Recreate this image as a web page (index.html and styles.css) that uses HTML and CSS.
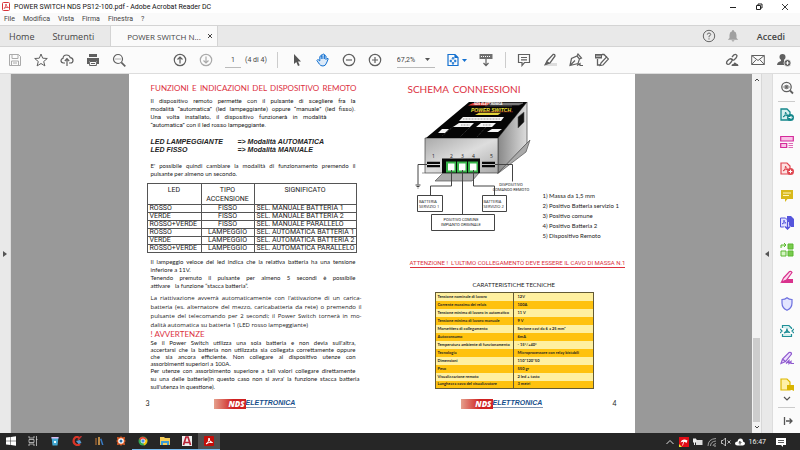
FILE: index.html
```html
<!DOCTYPE html>
<html lang="it">
<head>
<meta charset="utf-8">
<title>POWER SWITCH NDS PS12-100.pdf - Adobe Acrobat Reader DC</title>
<link rel="stylesheet" href="styles.css">
</head>
<body>
<div class="app">
  <header class="titlebar">
    <svg class="appicon" viewBox="0 0 8 9"><rect x=".5" y=".5" width="7" height="8" rx="1" fill="#fff" stroke="#d8343a"/><path d="M2 6.500C3.500 5 4 3.500 4 2c0 2 1 3 2.500 3.500C4.500 5 3 5.700 2 6.500Z" fill="none" stroke="#d8343a" stroke-width=".8"/></svg>
    <span>POWER SWITCH NDS PS12-100.pdf - Adobe Acrobat Reader DC</span>
    <div class="winbtns">
      <button aria-label="Riduci"><svg viewBox="0 0 8 8"><path d="M1 4.500h6" stroke="#222" /></svg></button>
      <button aria-label="Ripristina"><svg viewBox="0 0 8 8"><path d="M1.500 2.500h4v4h-4zM3 2.500V1h4v4H5.500" fill="none" stroke="#222"/></svg></button>
      <button aria-label="Chiudi"><svg viewBox="0 0 8 8"><path d="M1 1l6 6M7 1L1 7" stroke="#222" stroke-width=".9"/></svg></button>
    </div>
  </header>
  <nav class="menubar"><button>File</button><button>Modifica</button><button>Vista</button><button>Firma</button><button>Finestra</button><button>?</button></nav>
  <nav class="tabs">
    <button class="home">Home</button><button class="tools">Strumenti</button>
    <button class="active"><span>POWER SWITCH N...</span><svg viewBox="0 0 6 6"><path d="M1 1l4 4M5 1L1 5" stroke="#444" stroke-width="1"/></svg></button>
    <div class="account">
      <button aria-label="Guida"><svg class="i14" viewBox="0 0 14 14" fill="none" stroke="#666"><circle cx="7" cy="7" r="5.700"/><path d="M5.300 5.600Q5.400 4 7 4t1.700 1.500Q8.700 6.500 7 7.200V8.300M7 9.300v1.200"/></svg></button>
      <button aria-label="Notifiche"><svg class="i14" viewBox="0 0 14 14"><path d="M7 1q1 0 1 1.200Q10.500 3 10.500 6v3l1.700 1.700H1.800L3.500 9V6Q3.500 3 6 2.200 6 1 7 1ZM5.500 11.300h3Q8 12.500 7 12.500t-1.500-1.200" fill="#a0a0a0"/></svg></button>
      <button class="login">Accedi</button>
    </div>
  </nav>
  <div class="toolbar">
    <div class="group files">
      <button aria-label="Salva"><svg class="i14" viewBox="0 0 14 14" fill="none" stroke="#aaa"><path d="M1.500 1.500h9l2 2v9h-11zM4 1.500v4h6v-4M3.500 12.500V8h7v4.500M5 10h4"/></svg></button>
      <button aria-label="Preferiti"><svg class="i14" viewBox="0 0 14 14" fill="none" stroke="#606060"><path d="M7 1l1.700 4.200 4.600.3-3.600 3 1.200 4.400L7 10.500 3.100 12.900l1.200-4.400-3.600-3 4.600-.3z"/></svg></button>
      <button aria-label="Carica"><svg class="i14" viewBox="0 0 14 14" fill="none" stroke="#606060" stroke-width="1.200"><path d="M5 10H3.500Q1 9.700 1 7.500 1 5.700 3 5.300 3.200 2 6.500 2q3 0 3.700 2.700Q13 5 13 7.500T10.500 10H9M7 13V6M4.800 8L7 5.700 9.200 8"/></svg></button>
      <button aria-label="Stampa"><svg class="i14" viewBox="0 0 14 14"><path d="M3 1h8v3H3zM1 5h12v6h-2V8H3v3H1z" fill="#606060"/><path d="M3.600 8.500h6.800v4H3.600zM5 10.500h4" fill="#fff" stroke="#606060"/></svg></button>
      <button aria-label="Cerca"><svg class="i14" viewBox="0 0 14 14" fill="none" stroke="#606060"><circle cx="6" cy="6" r="4.500" stroke-width="1.200"/><path d="M9.300 9.300l4 4" stroke-width="1.700"/><path d="M3.500 6h1M5.500 6h1M7.500 6h1"/></svg></button>
    </div>
    <div class="group pages">
      <button aria-label="Pagina precedente"><svg class="i14" viewBox="0 0 14 14" fill="none" stroke="#606060" stroke-width="1.200"><circle cx="7" cy="7" r="5.700"/><path d="M7 10.500V4M4.500 6.500L7 4l2.500 2.500"/></svg></button>
      <button aria-label="Pagina successiva"><svg class="i14" viewBox="0 0 14 14" fill="none" stroke="#aaa" stroke-width="1.200"><circle cx="7" cy="7" r="5.700"/><path d="M7 3.500V10M4.500 7.500L7 10l2.500-2.500"/></svg></button>
    </div>
    <label class="pageno"><input value="1" aria-label="Pagina"><span>(4 di 4)</span></label>
    <i class="sep"></i>
    <div class="group view">
      <button aria-label="Selezione"><svg class="i14" viewBox="0 0 14 14"><path d="M4 1v10l2.300-2 1.700 4 1.700-.8L8 8.500h3z" fill="#555"/></svg></button>
      <button aria-label="Mano"><svg class="i14" viewBox="0 0 14 14"><path d="M3.800 8V3.500q.8-1 1.500 0V2q.8-1 1.600 0v-.5q.8-1 1.600 0V3q.8-1 1.500 0v3.500l1-1q1.500-.3 1.200.5L10.500 10Q9.500 13 7 13 4.500 13 3.300 11L.9 7.500Q1.500 6 2.700 7z" fill="#dceaf9" stroke="#1471d0"/><path d="M5.300 3v3M6.900 2.500V6M8.500 3v3" stroke="#1471d0" stroke-width=".9"/></svg></button>
      <button aria-label="Riduci zoom"><svg class="i14" viewBox="0 0 14 14" fill="none" stroke="#606060" stroke-width="1.200"><circle cx="7" cy="7" r="5.700"/><path d="M4 7h6"/></svg></button>
      <button aria-label="Aumenta zoom"><svg class="i14" viewBox="0 0 14 14" fill="none" stroke="#606060" stroke-width="1.200"><circle cx="7" cy="7" r="5.700"/><path d="M4 7h6M7 4v6"/></svg></button>
    </div>
    <div class="zoom"><select aria-label="Zoom"><option>67,2%</option></select><svg viewBox="0 0 5 3"><path d="M0 0h5L2.500 3z" fill="#555"/></svg></div>
    <div class="group fit">
      <button class="fitbtn" aria-label="Adatta"><svg class="i14" viewBox="0 0 14 14" fill="none" stroke="#1471d0" stroke-width="1.200"><path d="M2 1.500h7l3 3v8H2zM9 1.500v3h3"/><path d="M4 8h2M8 8h2M7 4.500v2M7 9v2" stroke-width="1.500"/><path d="M5 6.500L3.800 8 5 9.500M9 6.500L10.200 8 9 9.500M5.800 5.500L7 4.300l1.200 1.200M5.800 10.500L7 11.500l1.200-1" stroke-width=".8"/></svg><svg class="caret" viewBox="0 0 5 3"><path d="M0 0h5L2.500 3z" fill="#1471d0"/></svg></button>
      <button aria-label="Righello"><svg class="i14" viewBox="0 0 14 14"><path d="M.5 1h13v5H.5z" fill="#707070"/><path d="M2 3.500h10" stroke="#fff" stroke-dasharray="1 1"/><path d="M7 6v6M4.500 10L7 12.700 9.500 10" stroke="#606060" fill="none" stroke-width="1.200"/></svg></button>
    </div>
    <i class="sep"></i>
    <div class="group notes">
      <button aria-label="Commento"><svg class="i14" viewBox="0 0 14 14" fill="none" stroke="#606060" stroke-width="1.200"><path d="M1.500 1.500h11v8H7.500L5 12.500v-3H1.500zM4 4.500h6M4 6.800h6"/></svg></button>
      <button aria-label="Evidenzia"><svg class="i14" viewBox="0 0 14 14"><path d="M3 10h11v3H1z" fill="#ddd"/><path d="M4 8l6-6.500q2-.5 2 1.500L7 10l-4.500 1.500z" fill="#fff" stroke="#606060" stroke-width="1.300"/><path d="M4 8l3 2-6 2.500z" fill="#606060"/></svg></button>
      <button aria-label="Firma"><svg class="i14" viewBox="0 0 14 14" fill="none" stroke="#606060" stroke-width="1.200"><path d="M1 12.500l1.500-7L8 3l2.500 3-1.500 4.500zM1 12.500l5-5M8 3l1-2 3.500 4-2 1M8 12.500l3-2v2h3"/></svg></button>
      <button aria-label="Modifica"><svg class="i14" viewBox="0 0 14 14"><path d="M2.500 6v6h4M7 1.500h2l3 3" fill="none" stroke="#606060" stroke-width="1.300"/><path d="M0 1h7v4.500H0z" fill="#606060"/><path d="M1 3.200h5" stroke="#ddd"/><path d="M6 10l5.500-6 2 2-5.500 6-3 .5z" fill="#fff" stroke="#606060" stroke-width="1.200"/></svg></button>
    </div>
    <div class="group share">
      <button aria-label="Condividi link"><svg class="i14" viewBox="0 0 14 14"><path d="M7 4l2-2.200q2-1 3 .8 0 1.400-1 2.400L9 7Q7 8 6 6M7 8l-2.500 3q-2 1-3-.8 0-1.400 1-2.400L4.500 6Q6.500 5 8 7" fill="none" stroke="#606060" stroke-width="1.300"/><path d="M6.500 13q0-2.500 2-2 .8-2.500 2.800-.5Q13.500 10.500 13.500 13z" fill="#606060"/></svg></button>
      <button aria-label="Posta"><svg class="i14" viewBox="0 0 14 14" fill="none" stroke="#606060"><path d="M.7 2.500h12.600v9H.7zl6.300 5 6.300-5M.7 11.500l4.600-5M13.300 11.500l-4.600-5"/></svg></button>
      <button aria-label="Invita"><svg class="i14" viewBox="0 0 14 14"><circle cx="5.500" cy="4" r="3" fill="#606060"/><path d="M0 12Q0 9 4 8V6h3v2l2 1v3z" fill="#606060"/><circle cx="10.500" cy="10" r="3.500" fill="#606060" stroke="#fafafa" stroke-width=".7"/><path d="M8.700 10h3.600M10.500 8.200v3.600" stroke="#fff"/></svg></button>
    </div>
  </div>

  <div class="workspace">
    <button class="rail" aria-label="Apri riquadro"><svg viewBox="0 0 4 6"><path d="M0 0l4 3-4 3z" fill="#555"/></svg></button>
    <main class="canvas">
      <article class="sheet">
        <section class="leftpage">
          <h1>FUNZIONI E INDICAZIONI DEL DISPOSITIVO REMOTO</h1>
          <p class="intro"><span>Il dispositivo remoto permette con il pulsante di scegliere fra la</span><span>modalità “automatica” (led lampeggiante) oppure “manuale” (led fisso).</span><span class="short">Una volta installato, il dispositivo funzionerà in modalità</span><span class="end">“automatica” con il led rosso lampeggiante.</span></p>
          <dl><dt>LED LAMPEGGIANTE</dt><dd>=&gt; Modalità AUTOMATICA</dd><dt>LED FISSO</dt><dd>=&gt; Modalità MANUALE</dd></dl>
          <p class="change"><span>E' possibile quindi cambiare la modalità di funzionamento premendo il</span><span class="end">pulsante per almeno un secondo.</span></p>
          <table class="leds">
            <thead><tr><th>LED</th><th>TIPO<br>ACCENSIONE</th><th>SIGNIFICATO</th></tr></thead>
            <tbody>
            <tr><td>ROSSO</td><td>FISSO</td><td>SEL. MANUALE BATTERIA 1</td></tr>
            <tr><td>VERDE</td><td>FISSO</td><td>SEL. MANUALE BATTERIA 2</td></tr>
            <tr><td>ROSSO+VERDE</td><td>FISSO</td><td>SEL. MANUALE PARALLELO</td></tr>
            <tr><td>ROSSO</td><td>LAMPEGGIO</td><td>SEL. AUTOMATICA BATTERIA 1</td></tr>
            <tr><td>VERDE</td><td>LAMPEGGIO</td><td>SEL. AUTOMATICA BATTERIA 2</td></tr>
            <tr><td>ROSSO+VERDE</td><td>LAMPEGGIO</td><td>SEL. AUTOMATICA PARALLELO</td></tr>
            </tbody>
          </table>
          <p class="blink"><span>Il lampeggio veloce del led indica che la relativa batteria ha una tensione</span><span class="end">inferiore a 11V.</span><span>Tenendo premuto il pulsante per almeno 5 secondi è possibile</span><span class="end">attivare &nbsp; la funzione “stacca batteria”.</span></p>
          <p class="restart"><span>La riattivazione avverrà automaticamente con l'attivazione di un carica-</span><span>batteria (es. alternatore del mezzo, caricabatteria da rete) o premendo il</span><span>pulsante del telecomando per 2 secondi; il Power Switch tornerà in mo-</span><span class="end">dalità automatica su batteria 1 (LED rosso lampeggiante)</span></p>
          <h2>! AVVERTENZE</h2>
          <p class="warn"><span>Se il Power Switch utilizza una sola batteria e non devia sull'altra,</span><span>accertarsi che la batteria non utilizzata sia collegata correttamente oppure</span><span>che sia ancora efficiente. Non collegare al dispositivo utenze con</span><span class="end">assorbimenti superiori a 100A.</span></p>
          <p class="warn loose"><span>Per utenze con assorbimento superiore a tali valori collegare direttamente</span><span class="wide">su una delle batterie(in questo caso non si avra' la funzione stacca batteria</span><span class="end">sull'utenza in questione).</span></p>
          <footer><span class="num">3</span><div class="logo"><b>NDS</b><div><strong>ELETTRONICA</strong><i></i></div></div></footer>
        </section>
        <section class="rightpage">
          <h1>SCHEMA CONNESSIONI</h1>
          <div class="scheme">
            <svg class="diagram" viewBox="408 99 132 134" role="img" aria-label="Schema di collegamento Power Switch">
              <defs><linearGradient id="front" x2="1" y2="1"><stop stop-color="#aaa"/><stop offset=".5" stop-color="#ddd"/><stop offset="1" stop-color="#aaa"/></linearGradient><linearGradient id="side"><stop stop-color="#888"/><stop offset="1" stop-color="#ddd"/></linearGradient></defs>
              <path d="M497 173l33-33-4 12-28 21.500zM443 173h36l-7 8h-37z" fill="#aaa" stroke="#555" stroke-width=".7"/>
              <path d="M498 138l29-36v41l-29 30z" fill="url(#side)" stroke="#444" stroke-width=".7"/>
              <path d="M425 138h73v35h-73z" fill="url(#front)" stroke="#444" stroke-width=".7"/>
              <path d="M426 138l43-36h58l-29 36z" fill="#050505"/>
              <path d="M422 173h3M518 117l6-5v10l-6 6z" fill="#111" stroke="#555" stroke-width=".6"/>
              <path d="M473 103l18-.5-4 3h-19z" fill="#e54034"/><path d="M492 103h31l-4 2h-29M485 106h27" stroke="#888" fill="#777" stroke-width=".5"/>
              <text x="474" y="105.400" class="board" fill="#fff">NDS ELETTRONICA</text>
              <text x="471" y="111.500" class="brand" fill="#f3e83a">POWER SWITCH</text>
              <path d="M474 111.800h39" stroke="#c33" stroke-width=".5"/><path d="M479 112.700h22l-3 2.300h-23z" fill="#e2d53a"/>
              <path d="M463 117h41l-3 4h-42zM459 123h15l-4 4h-17zM481 123h15l-4 4h-16zM442 129h7l-4 4h-7zM492 129h10l-4 3h-11z" fill="#f5f5f5"/>
              <path d="M463 119h37M461 125h9M483 125h8" stroke="#777" stroke-width=".7" stroke-dasharray="1 .5"/>
              <path d="M454 126l-12 10M470 127l-10 10M486 127l-9 10" stroke="#777" stroke-width=".5" stroke-dasharray="1 1"/>
              <g class="pins"><text x="432" y="158">1</text><text x="450" y="158">2</text><text x="461" y="158">3</text><text x="472" y="158">4</text><text x="490" y="158">5</text></g>
              <path d="M427 161.800h13v2.200h-13zM427 165h13v2.200h-13zM482 161.800h13v2.200h-13zM482 165h13v2.200h-13zM442 158.500h38v14.500h-38z" fill="#080808"/>
              <path d="M446 161.500h10v11h-10zM457 161.500h10v11h-10zM468 161.500h10v11h-10z" fill="#37b34a"/><path d="M448 163.500h6.500v7h-6.500zM459 163.500h6.500v7h-6.500zM470 163.500h6.500v7h-6.500z" fill="#fff"/>
              <path d="M427 164.500h-9v20M415.500 185h5M416.500 186.500h3M417.500 188h1M495 164.500h17.500v17M451.500 170v16h-21v9M462.500 170v44M473.500 170v16h21v9" fill="none" stroke="#444"/>
              <g fill="none" stroke="#444"><path d="M417.500 195.500h25v16h-25zM482.500 195.500h24v16h-24zM431.500 214.500h63v16h-63z"/></g>
              <g class="boxes"><text x="419" y="203">BATTERIA</text><text x="419" y="208">SERVIZIO 1</text><text x="483.500" y="203">BATTERIA</text><text x="483.500" y="208">SERVIZIO 2</text></g>
              <g class="tiny"><text x="511" y="186">DISPOSITIVO</text><text x="511" y="191">COMANDO REMOTO</text></g>
              <g class="tiny"><text x="461" y="221">POSITIVO COMUNE</text><text x="461" y="226">IMPIANTO ORIGINALE</text></g>
            </svg>
            <ol><li>1) Massa da 1,5 mm</li><li>2) Positivo Batteria servizio 1</li><li>3) Positivo comune</li><li>4) Positivo Batteria 2</li><li>5) Dispositivo Remoto</li></ol>
          </div>
          <p class="attention">ATTENZIONE ! &nbsp;L'ULTIMO COLLEGAMENTO DEVE ESSERE IL CAVO DI MASSA N.1</p>
          <h3>CARATTERISTICHE TECNICHE</h3>
          <table class="specs"><tbody>
            <tr><td>Tensione nominale di lavoro</td><td>12V</td></tr>
            <tr><td>Corrente massima dei relais</td><td>100A</td></tr>
            <tr><td>Tensione minima di lavoro in automatico</td><td>11 V</td></tr>
            <tr><td>Tensione minima di lavoro manuale</td><td>9 V</td></tr>
            <tr><td>Morsettiera di collegamento</td><td>Sezione cavi da 6 a 25 mm²</td></tr>
            <tr><td>Autoconsumo</td><td>6mA</td></tr>
            <tr><td>Temperatura ambiente di funzionamento</td><td>- 15°/+40°</td></tr>
            <tr><td>Tecnologia</td><td>Microprocessore con relay bistabili</td></tr>
            <tr><td>Dimensioni</td><td>110*120*50</td></tr>
            <tr><td>Peso</td><td>550 gr</td></tr>
            <tr><td>Visualizzazione remoto</td><td>2 led + tasto</td></tr>
            <tr><td>Lunghezza cavo del visualizzatore</td><td>3 metri</td></tr>
          </tbody></table>
          <footer><div class="logo"><b>NDS</b><div><strong>ELETTRONICA</strong><i></i></div></div><span class="num">4</span></footer>
        </section>
      </article>
    </main>
    <div class="scroll"><svg viewBox="0 0 6 4"><path d="M1 3l2-2 2 2" fill="none" stroke="#444"/></svg><i></i><svg viewBox="0 0 6 4"><path d="M1 1l2 2 2-2" fill="none" stroke="#444"/></svg></div>
    <button class="rail right" aria-label="Chiudi riquadro"><svg viewBox="0 0 4 6"><path d="M4 0L0 3l4 3z" fill="#555"/></svg></button>
    <aside class="panel">
      <button aria-label="Cerca strumenti"><svg class="i14" viewBox="0 0 14 14" fill="none" stroke="#606060"><circle cx="6.500" cy="6" r="4.700" stroke-width="1.300"/><path d="M10 9.500l3 3" stroke-width="1.800"/><path d="M3.500 6q3-3.500 6 0-3 3.500-6 0z" stroke-width=".8"/><circle cx="6.500" cy="6" r="1" fill="#606060"/></svg></button>
      <hr>
      <button aria-label="Esporta PDF"><svg class="i14" viewBox="0 0 14 14"><path d="M1 1h6l3 3v8H1z" fill="#d5efef" stroke="#16888c" stroke-width="1.300"/><path d="M3 9q3-2 2.500-5 .5 3 3 3.500Q5 7 3 9z" fill="none" stroke="#16888c"/><circle cx="10.500" cy="9.500" r="3.500" fill="#16888c"/><path d="M8.500 9.500h3M10.500 8l1.500 1.500-1.500 1.500" stroke="#fff" fill="none"/></svg></button>
      <button aria-label="Modifica PDF"><svg class="i14" viewBox="0 0 14 14" fill="#f9c2e6" stroke="#d42b9b"><path d="M.7 1.500h12.600v4.500H.7zM.7 8.500h6v4h-6z" stroke-width="1.200"/><path d="M8.500 8.500H13M8.500 10.500H13M8.500 12.500H13" stroke-width=".7"/></svg></button>
      <button aria-label="Crea PDF"><svg class="i14" viewBox="0 0 14 14"><path d="M1 1h6l3 3v8H1z" fill="#fde0e0" stroke="#df4650" stroke-width="1.200"/><path d="M3 9q3-2 2.500-5 .5 3 3 3.500Q5 7 3 9z" fill="none" stroke="#df4650"/><circle cx="10.500" cy="9.500" r="3.500" fill="#df4650"/><path d="M8.700 9.500h3.600M10.500 7.700v3.600" stroke="#fff"/></svg></button>
      <button aria-label="Commento"><svg class="i14" viewBox="0 0 14 14"><path d="M1 1h12v9H7.500L5 13v-3H1z" fill="#d9b91b"/><path d="M3 4h8M3 6.500h6" stroke="#fff6bd"/></svg></button>
      <button aria-label="Combina file"><svg class="i14" viewBox="0 0 14 14"><path d="M7 0h4l3 3v8H7z" fill="#5555dc"/><path d="M.5 2h5l2 2v7h-7z" fill="#dfe0ff" stroke="#5555dc"/><path d="M2 8q2-1 2-4 0 3 2.500 3Q4 6.500 2 8z" stroke="#5555dc" fill="none" stroke-width=".8"/><path d="M7.500 6v7M4.500 10.500l3 3 3-3" stroke="#fff" fill="none" stroke-width="3"/><path d="M7.500 6v7M5 10.500l2.500 2.500 2.500-2.500" stroke="#5555dc" fill="none" stroke-width="1.500"/></svg></button>
      <button aria-label="Organizza pagine"><svg class="i14" viewBox="0 0 14 14" fill="#d5f5c3" stroke="#5bb730"><path d="M8 1h5v5H8zM8 8h5v5H8z" fill="#79cb4e"/><path d="M1 8h5v5H1zM1 5V2h5M4 0l2 2-2 2"/></svg></button>
      <button aria-label="Oscura"><svg class="i14" viewBox="0 0 14 14"><path d="M4 9h9v4H1z" fill="#d9328d"/><path d="M3.500 8l6-6.500q2-.5 2.500 1L6.500 10l-5 2z" fill="#fbdbee" stroke="#d9328d" stroke-width="1.200"/></svg></button>
      <button aria-label="Proteggi"><svg class="i14" viewBox="0 0 14 14"><path d="M7 .8Q9 2.500 12 2.500V6q0 5-5 7.300Q2 11 2 6V2.500Q5 2.500 7 .8z" fill="#e3e5ff" stroke="#6d70df" stroke-width="1.200"/></svg></button>
      <button aria-label="Ottimizza PDF"><svg class="i14" viewBox="0 0 14 14" fill="none" stroke="#208f97" stroke-width="1.200"><path d="M2.500 4V1.500H9l2.500 2.500v1M2.500 10v2.500h9V10" fill="#d5efef"/><path d="M0 5l2 2-2 2M14 5l-2 2 2 2M4 9q3-1 3-4.500Q7 8 10 8.500 7 7.500 4 9"/></svg></button>
      <button aria-label="Compila e firma"><svg class="i14" viewBox="0 0 14 14" fill="#eee0ff" stroke="#905bcf" stroke-width="1.200"><path d="M1 12.500L2.500 8 9 1.500q2.500-.5 2.500 1.500L5.500 10.500zM2.500 8l3 2.500M6 12.500l3-3v3l2-2v2h3"/></svg></button>
      <button aria-label="Invia per revisione"><svg class="i14" viewBox="0 0 14 14"><path d="M1 1h6l3 3v8H1z" fill="#fff1a8" stroke="#ddb800" stroke-width="1.200"/><path d="M7 7h7v6l-2-1H7z" fill="#d9b400"/></svg></button>
      <svg class="more" viewBox="0 0 8 5"><path d="M1 1l3 3 3-3" fill="none" stroke="#555" stroke-width="1.200"/></svg>
      <hr>
      <button class="expand" aria-label="Espandi"><svg class="i14" viewBox="0 0 14 14"><path d="M4.500 3v8M6 7h6M9.500 4.500L12 7 9.500 9.500" fill="none" stroke="#555" stroke-width="1.300"/></svg></button>
    </aside>
  </div>
  <footer class="taskbar">
    <button aria-label="Start"><svg viewBox="0 0 10 10"><path d="M0 1.500L4.500 1v3.700H0zM5 1l5-.7v4.400H5zM0 5.200h4.500V9L0 8.500zM5 5.200h5v4.500L5 9z" fill="#fff"/></svg></button>
    <button aria-label="Visualizzazione attività"><svg viewBox="0 0 10 10" fill="none" stroke="#ccc" stroke-width=".8"><path d="M1 0v2h5V0M1 10V8h5v2M1 3.500h5v3H1zM8.500 0v10M8 3.500h1.500"/></svg></button>
    <button aria-label="Cestino"><svg viewBox="0 0 10 10"><path d="M1.500 1h7l-1 8.500h-5z" fill="#43a7d2"/><path d="M1.500 1h7v1.500h-7z" fill="#dbe"/><path d="M4 5h2v2H4z" fill="#eff"/></svg></button>
    <button aria-label="CCleaner"><svg viewBox="0 0 10 10"><path d="M7.500 2Q4-.5 2 3q-1.500 4.500 2.500 6 2 .5 3.500-1" fill="none" stroke="#d93527" stroke-width="2.200"/><path d="M9.500 0L6 4" fill="none" stroke="#b33" stroke-width="1.500"/><path d="M4 5l4-1 1.500 3-3 1z" fill="#5a9bd0"/></svg></button>
    <button aria-label="Libreria"><svg viewBox="0 0 10 10"><path d="M1 2h2v7H1z" fill="#79512f"/><path d="M4 1h2v8H4z" fill="#ba8a47"/><path d="M6 3l1.500-.5L9.500 9H8z" fill="#397bc3"/></svg></button>
    <button aria-label="Visualizzatore"><svg viewBox="0 0 10 10"><path d="M1 1l3 .5L5 0l1 1.500L9 1l-.5 3L10 5 8.500 6 9 9l-3-.5L5 10 4 8.500 1 9l.5-3L0 5l1.500-1z" fill="#e76027"/><circle cx="5" cy="5" r="2.800" fill="#fff"/><circle cx="5" cy="5" r="1.500" fill="#286ca5"/></svg></button>
    <button class="open" aria-label="Chrome"><svg viewBox="0 0 10 10"><circle cx="5" cy="5" r="4.500" fill="#35a852"/><path d="M1 3Q4-1.500 9 3L5 5z" fill="#e94335"/><path d="M9 3q1.500 4-3 6.500L5 5z" fill="#fabd05"/><circle cx="5" cy="5" r="2" fill="#438be8" stroke="#fff" stroke-width=".7"/></svg></button>
    <button class="open" aria-label="Esplora file"><svg viewBox="0 0 10 10"><path d="M0 1h4l1 1h5v7H0z" fill="#f6ce58"/><path d="M1 5h8v4H7V7H3v2H1z" fill="#3d9dd5"/></svg></button>
    <button class="open" aria-label="AutoCAD"><svg viewBox="0 0 10 10"><path d="M0 0h10v10H0z" fill="#eee"/><path d="M1.500 9L4 1h2l2.500 8M3 6.500h4" fill="none" stroke="#b72235" stroke-width="1.700"/></svg></button>
    <button class="open current" aria-label="Acrobat Reader"><svg viewBox="0 0 10 10"><rect width="10" height="10" rx="1" fill="#c40d08"/><path d="M2 8q3-2 3-6 0 4 3.500 4.500Q5 5.500 2 8z" fill="none" stroke="#fff"/></svg></button>
    <div class="tray">
      <svg viewBox="0 0 10 10"><path d="M1.500 7L5 3.500 8.500 7" fill="none" stroke="#ddd"/></svg>
      <svg viewBox="0 0 10 10"><path d="M0 0h10v10H0z" fill="#e20c16"/><path d="M1.500 5.500Q3 1 8.500 3.500L7.500 6Q5 4 1.500 5.500" fill="#fff"/><path d="M5 4L3.500 8.500" stroke="#fff" fill="none" stroke-width=".8"/><path d="M0 10V7l3 3z" fill="#ee3"/></svg>
      <svg viewBox="0 0 10 10"><path d="M3 3h6.500v5H3z" fill="#ddd"/><path d="M0 2h3v3H0zM1.500 5v3" fill="#eee" stroke="#eee"/></svg>
      <svg viewBox="0 0 10 10" fill="none" stroke="#aaa" stroke-width=".9"><path d="M1 9Q1 2 9 1.500M3.500 9Q3.500 4.500 9 4M6 9q0-2 3-2.500"/><circle cx="8" cy="9" r=".5"/></svg>
      <svg viewBox="0 0 10 10" fill="none" stroke="#ddd" stroke-width=".8"><path d="M.5 3.500h1.500L4.500 1v8L2 6.500H.5zM6.500 3.500l3 3M9.500 3.500l-3 3"/></svg>
      <svg class="cloud" viewBox="0 0 10 10"><path d="M2.500 8.500q-2.500 0-2.500-2T2.500 4.500Q3 1.500 5.500 1.500T8 4.500q2 .3 2 2t-2 2z" fill="#fff"/><path d="M5 7.500V4.500M3.700 5.800L5 4.500l1.300 1.300" stroke="#333" fill="none"/></svg>
      <time>16:47</time>
      <svg class="notice" viewBox="0 0 10 10"><path d="M0 1h10v7H7v2L5 8H0z" fill="#fff"/><path d="M2 3.500h6M2 5.500h6" stroke="#333" stroke-width=".8"/></svg>
    </div>
  </footer>
</div>
</body>
</html>
```
FILE: styles.css
```css
* { box-sizing: border-box; }
body { margin: 0; font-family: "Open Sans", sans-serif; color: #444; background: #fff; }
button { border: 0; padding: 0; margin: 0; background: none; color: inherit; font: inherit; display: flex; align-items: center; justify-content: center; flex: none; }
svg { display: block; flex: none; }
h1, h2, h3, p, dl, dd, ol { margin: 0; padding: 0; }
h1, h2, h3 { font-weight: 400; }
.app { height: 100vh; display: flex; flex-direction: column; overflow: hidden; }
.i14 { width: 14px; height: 14px; }

.titlebar { height: 13px; flex: none; display: flex; align-items: center; padding: 0 11px 0 2px; gap: 4px; font: 7px Roboto, sans-serif; color: #111; }
.appicon { width: 8px; height: 9px; }
.winbtns { margin-left: auto; display: flex; gap: 18px; }
.winbtns svg { width: 8px; height: 8px; }
.menubar { height: 12px; flex: none; display: flex; align-items: center; gap: 8px; padding-left: 4px; font: 7px Roboto, sans-serif; background: #fafafa; }
.tabs { height: 22px; flex: none; display: flex; background: #e9e9e9; border: solid #d4d4d4; border-width: 1px 0; }
.home { padding: 0 9px; font-size: 9px; }
.tools { padding: 0 16px 0 9px; font-size: 9px; }
.active { background: #fafafa; padding: 0 4px 0 16px; gap: 6px; border: solid #d4d4d4; border-width: 0 1px; font-size: 8px; }
.active svg { width: 6px; height: 6px; }
.account { margin-left: auto; display: flex; padding-right: 15px; gap: 10px; }
.login { padding-left: 7px; font-size: 9px; font-weight: 600; }

.toolbar { height: 27px; flex: none; display: flex; align-items: center; padding: 0 9px 0 8px; background: #fbfbfb; border-bottom: 1px solid #ddd; }
.group { display: flex; gap: 12px; }
.pages { margin-left: 47px; }
.pageno { display: flex; align-items: center; gap: 4px; margin: 0 10px 0 12px; font: 7px Roboto, sans-serif; }
.pageno input { width: 16px; height: 16px; padding: 0; border: 0; border-bottom: 1px solid #bbb; background: none; font: inherit; color: inherit; text-align: center; }
.sep { width: 1px; height: 16px; background: #ccc; flex: none; }
.view { margin-left: 12px; }
.zoom { display: flex; align-items: center; width: 38px; height: 16px; margin: 0 11px 0 15px; border-bottom: 1px solid #bbb; }
.zoom select { appearance: none; border: 0; padding: 0; background: none; font: 7px Roboto, sans-serif; color: inherit; width: 28px; }
.zoom > svg, .caret { width: 5px; height: 3px; }
.fitbtn { gap: 2px; }
.fit { margin-right: 12px; }
.notes { margin-left: 11px; }
.share { margin-left: auto; }

.workspace { flex: 1; min-height: 0; display: flex; }
.rail { width: 11px; background: #e9e9e9; border-right: 1px solid #ddd; }
.rail svg { width: 4px; height: 6px; }
.canvas { flex: 1; min-width: 0; background: #999; display: flex; justify-content: center; overflow: hidden; }
.scroll { width: 10px; flex: none; background: #f3f3f3; border-right: 1px solid #d8d8d8; display: flex; flex-direction: column; align-items: center; padding: 4px 1px; }
.scroll svg { width: 6px; height: 4px; }
.scroll i { width: 100%; height: 84px; margin: auto 0 3px; background: #cdcdcd; }
.panel { width: 27px; flex: none; background: #fbfbfb; display: flex; flex-direction: column; align-items: center; padding-top: 7px; gap: 13px; }
.panel hr { width: 17px; height: 1px; flex: none; border: 0; margin: -7px 0; background: #ccc; }
.more { width: 8px; height: 5px; margin-top: -9px; }

.sheet { flex: 0 1 506px; min-width: 0; background: #fff; display: grid; grid-template-columns: 250px minmax(0, 1fr); font-family: Lato, sans-serif; color: #222; }
.leftpage { padding: 8px 20px 0 21px; }
.leftpage p { font-size: 6px; line-height: 8px; padding: 0 3px 0 1px; }
p span { display: block; white-space: nowrap; text-align: justify; text-align-last: justify; }
p .end { text-align-last: left; }
p .short { margin-right: 29px; }
.leftpage h1 { font-size: 8px; line-height: 12px; color: #dc303e; white-space: nowrap; margin: 0 2px 0 1px; text-align-last: justify; }
.leftpage .intro { padding-top: 3px; font-family: Roboto, sans-serif; }
dl { display: grid; grid-template-columns: 87px 1fr; padding-left: 1px; margin-top: 9px; font: italic 700 7px/8px "Liberation Sans", sans-serif; white-space: nowrap; }
.leftpage .change { padding-top: 8px; }
table { border-collapse: collapse; table-layout: fixed; }
.leds { width: 210px; margin: 5px 0 0 -3px; font: 7px/7px Roboto, sans-serif; color: #222; }
.leds td, .leds th { border: 1px solid #555; padding: 0 2px; font-weight: 400; height: 8px; white-space: nowrap; }
.leds th { height: 21px; line-height: 9px; vertical-align: top; padding-top: 2px; }
.leds th:nth-child(1) { width: 54px; }
.leds th:nth-child(2) { width: 53px; }
.leds td:nth-child(2) { text-align: center; }
.leftpage .blink { padding-top: 5px; }
.leftpage .restart { line-height: 9px; padding: 4px 0 0 1px; margin-right: -3px; font-family: "Open Sans", sans-serif; }
.leftpage h2 { font-size: 8px; line-height: 9px; color: #dc303e; margin-left: 1px; }
.leftpage .warn { line-height: 7px; }
.leftpage .loose { line-height: 8px; }
.warn .wide { margin-right: -4px; }
footer { display: flex; align-items: flex-start; font-size: 7px; line-height: 8px; }
.leftpage footer { margin: 8px 0 0 -4px; gap: 64px; }
.logo { display: flex; width: 85px; height: 10px; font: italic 900 8px/8px "Open Sans", sans-serif; color: #fff; }
.logo b { width: 32px; padding-right: 1px; line-height: 10px; text-align: right; background: linear-gradient(90deg, #e5a08c, #cf2020 60%); }
.logo strong { display: block; font: italic 700 7px/8px "Liberation Sans", sans-serif; color: #174f8c; }
.logo i { display: block; height: 1px; width: 50px; background: #8097b3; }

.rightpage { padding: 9px 15px 0 29px; }
.rightpage h1 { width: 113px; font-size: 10px; line-height: 12px; color: #dc303e; white-space: nowrap; text-align-last: justify; }
.scheme { display: flex; gap: 3px; margin-top: 4px; }
.diagram { width: 132px; height: 134px; }
.board { font: italic 700 3px "Liberation Sans", sans-serif; }
.brand { font: italic 700 5px "Liberation Sans", sans-serif; }
.pins { font: 5px "Open Sans", sans-serif; fill: #222; }
.boxes { font: 4px "Open Sans", sans-serif; fill: #222; }
.tiny { font: 4px Roboto, sans-serif; fill: #222; text-anchor: middle; }
ol { list-style: none; font-size: 6px; line-height: 10px; padding-top: 92px; white-space: nowrap; }
.attention { width: fit-content; margin: 17px 0 0 2px; font: 6px/9px Roboto, sans-serif; color: #dc303e; border-bottom: 1px solid #dc303e; white-space: nowrap; }
.rightpage h3 { font-size: 6px; line-height: 10px; margin: 12px 0 2px 65px; }
.specs { width: 159px; margin-left: 27px; font: 700 4px/6px Lato, sans-serif; border: 1px solid #635a35; }
.specs td { height: 8px; padding: 0 4px; border-right: 1px solid #635a35; white-space: nowrap; }
.specs td:first-child { width: 78px; padding: 0 2px; }
.specs tr:nth-child(odd) { background: #fff0a0; }
.specs tr:nth-child(even) { background: #ffc20e; }
.rightpage footer { margin: 10px 3px 0 53px; justify-content: space-between; }

.taskbar { height: 17px; flex: none; align-items: center; background: #262626; color: #eee; }
.taskbar > button { width: 22px; height: 17px; border-bottom: 1px solid transparent; }
.taskbar button svg, .tray svg { width: 10px; height: 10px; }
.taskbar > .open { border-color: #76b9ed; }
.taskbar > .current { background: #505050; }
.tray { margin-left: auto; padding-right: 14px; display: flex; align-items: center; gap: 4px; font: 7px Roboto, sans-serif; }
.tray .notice { margin-left: 6px; }
```
